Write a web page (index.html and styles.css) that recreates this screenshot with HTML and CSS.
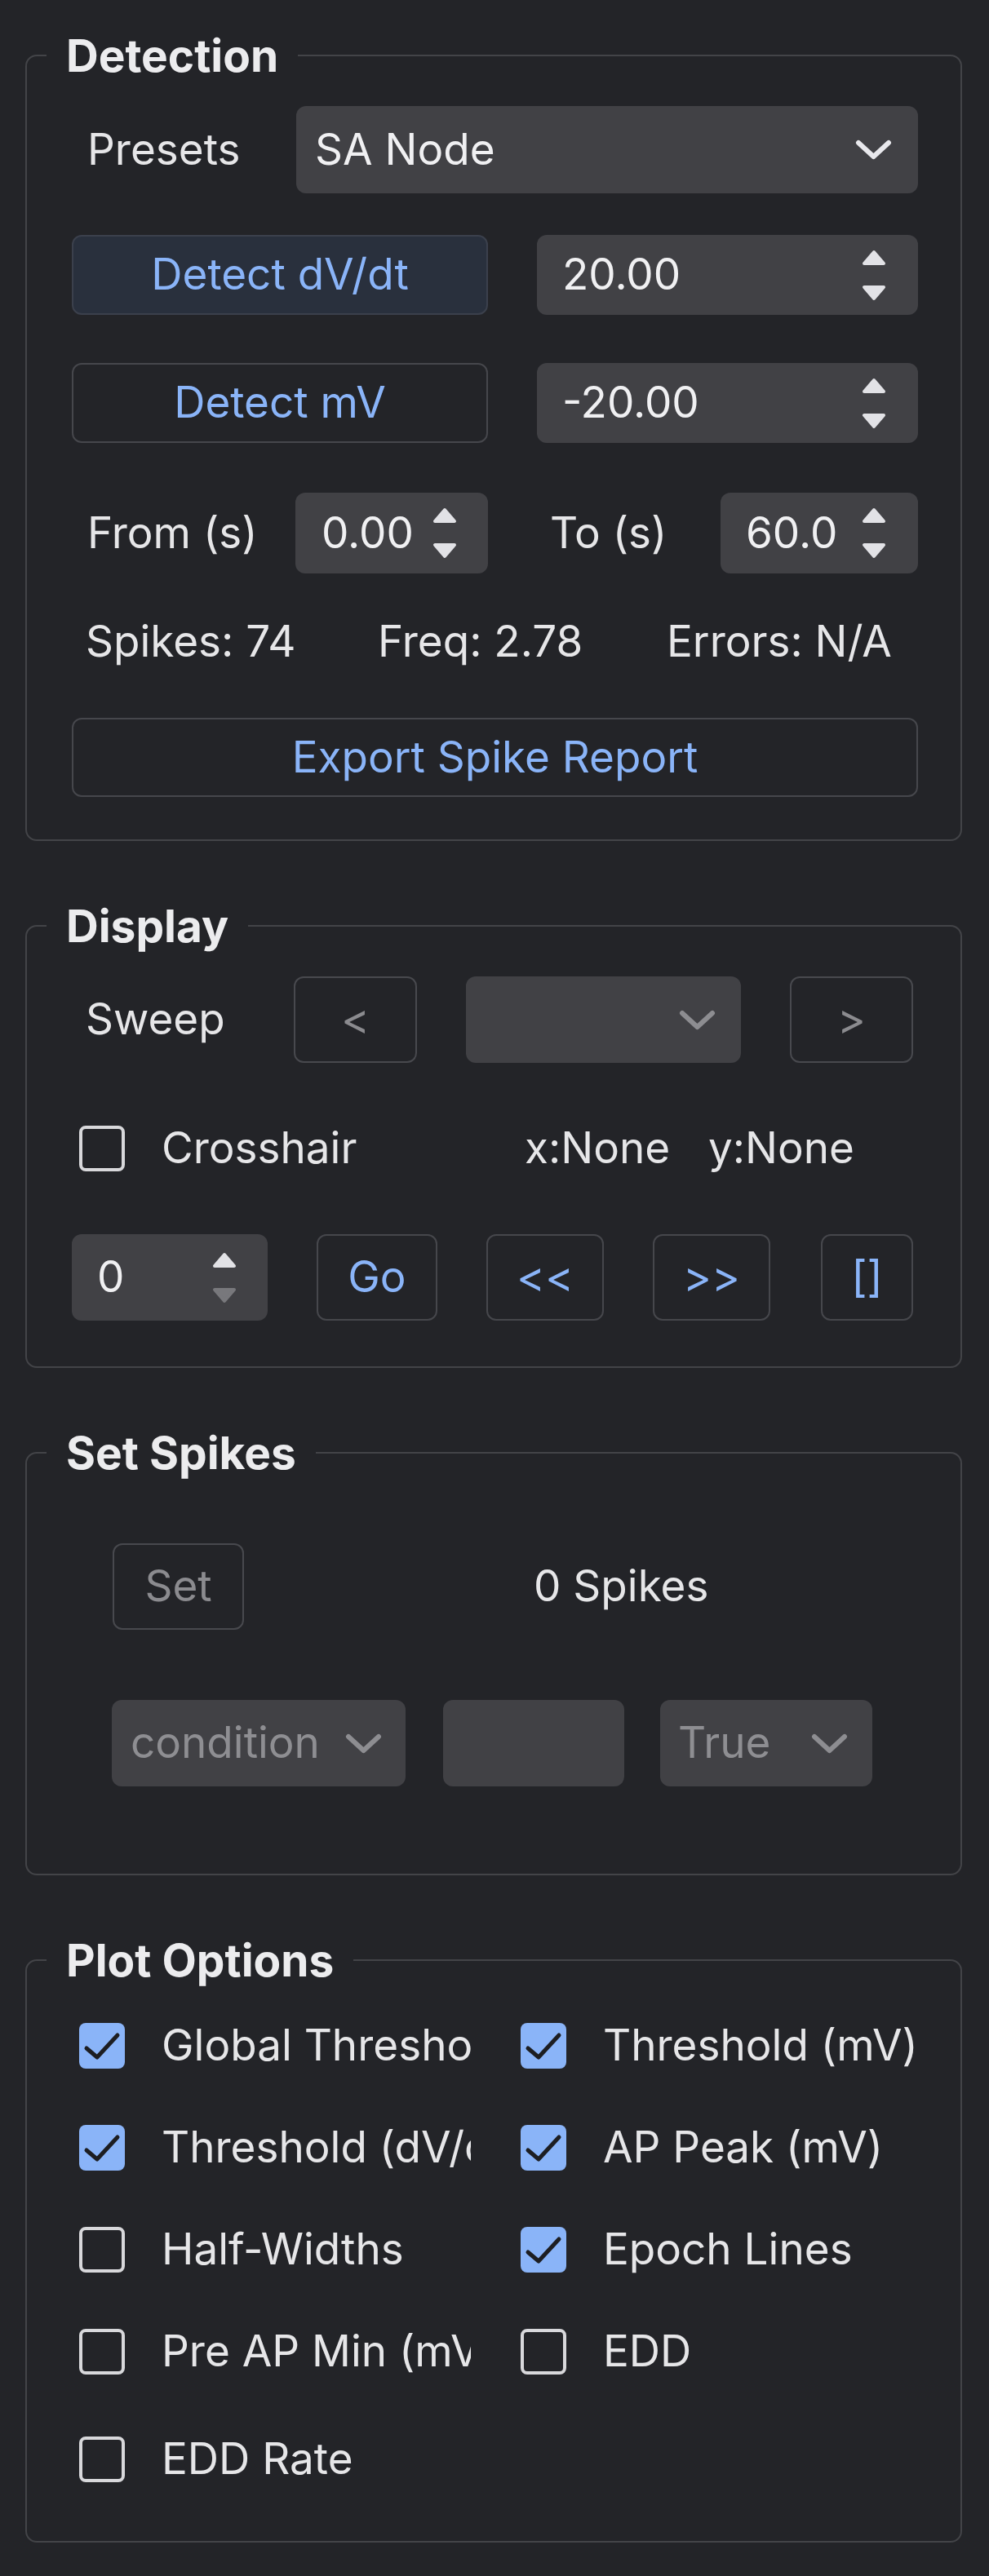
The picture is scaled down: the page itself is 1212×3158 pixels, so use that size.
FILE: index.html
```html
<!DOCTYPE html>
<html>
<head>
<meta charset="utf-8">
<title>Spike Detection Panel</title>
<link rel="stylesheet" href="styles.css">
</head>
<body>
<main class="panel">

  <fieldset class="group g-detection">
    <legend>Detection</legend>
    <div class="row r-presets">
      <span class="lbl lbl-presets">Presets</span>
      <div class="combo combo-presets">
        <span>SA Node</span>
        <svg class="chev" width="45" height="25" viewBox="0 0 45 25"><polyline points="4,4 22.5,21 41,4"/></svg>
      </div>
    </div>
    <div class="row r-dvdt">
      <button class="btn btn-detect primary">Detect dV/dt</button>
      <div class="spin spin-wide">
        <span>20.00</span>
        <svg class="arrows" width="30" height="63" viewBox="0 0 30 63"><path d="M15 3 L27 17 L3 17 Z"/><path d="M3 46 L27 46 L15 60 Z"/></svg>
      </div>
    </div>
    <div class="row r-mv">
      <button class="btn btn-detect">Detect mV</button>
      <div class="spin spin-wide">
        <span>-20.00</span>
        <svg class="arrows" width="30" height="63" viewBox="0 0 30 63"><path d="M15 3 L27 17 L3 17 Z"/><path d="M3 46 L27 46 L15 60 Z"/></svg>
      </div>
    </div>
    <div class="row r-range">
      <span class="lbl lbl-from">From (s)</span>
      <div class="spin spin-from">
        <span>0.00</span>
        <svg class="arrows" width="30" height="63" viewBox="0 0 30 63"><path d="M15 3 L27 17 L3 17 Z"/><path d="M3 46 L27 46 L15 60 Z"/></svg>
      </div>
      <span class="lbl lbl-to">To (s)</span>
      <div class="spin spin-to">
        <span>60.0</span>
        <svg class="arrows" width="30" height="63" viewBox="0 0 30 63"><path d="M15 3 L27 17 L3 17 Z"/><path d="M3 46 L27 46 L15 60 Z"/></svg>
      </div>
    </div>
    <div class="row r-stats">
      <span class="stat">Spikes: 74</span>
      <span class="stat">Freq: 2.78</span>
      <span class="stat">Errors: N/A</span>
    </div>
    <div class="row r-export">
      <button class="btn btn-export">Export Spike Report</button>
    </div>
  </fieldset>

  <fieldset class="group g-display">
    <legend>Display</legend>
    <div class="row r-sweep">
      <span class="lbl lbl-sweep">Sweep</span>
      <button class="btn btn-nav disabled">&lt;</button>
      <div class="combo combo-sweep">
        <span></span>
        <svg class="chev dim" width="45" height="25" viewBox="0 0 45 25"><polyline points="4,4 22.5,21 41,4"/></svg>
      </div>
      <button class="btn btn-nav disabled">&gt;</button>
    </div>
    <div class="row r-cross">
      <span class="check"></span>
      <span class="cross-lbl">Crosshair</span>
      <span class="coord coord-x">x:None</span>
      <span class="coord">y:None</span>
    </div>
    <div class="row r-nav">
      <div class="spin spin-sweep">
        <span>0</span>
        <svg class="arrows half" width="30" height="63" viewBox="0 0 30 63"><path d="M15 3 L27 17 L3 17 Z"/><path class="off" d="M3 46 L27 46 L15 60 Z"/></svg>
      </div>
      <button class="btn btn-go">Go</button>
      <button class="btn btn-jump">&lt;&lt;</button>
      <button class="btn btn-jump">&gt;&gt;</button>
      <button class="btn btn-bracket">[]</button>
    </div>
  </fieldset>

  <fieldset class="group g-spikes">
    <legend>Set Spikes</legend>
    <div class="row r-set">
      <button class="btn btn-set disabled">Set</button>
      <span class="spike-count">0 Spikes</span>
    </div>
    <div class="row r-cond">
      <div class="combo combo-cond disabled">
        <span>condition</span>
        <svg class="chev dim" width="45" height="25" viewBox="0 0 45 25"><polyline points="4,4 22.5,21 41,4"/></svg>
      </div>
      <div class="field field-empty"></div>
      <div class="combo combo-true disabled">
        <span>True</span>
        <svg class="chev dim" width="45" height="25" viewBox="0 0 45 25"><polyline points="4,4 22.5,21 41,4"/></svg>
      </div>
    </div>
  </fieldset>

  <fieldset class="group g-plot">
    <legend>Plot Options</legend>
    <div class="opts">
      <label class="opt"><span class="check on"><svg width="56" height="56" viewBox="0 0 56 56"><polyline points="9,31 22,42 47,15"/></svg></span><span class="opt-lbl">Global Threshold</span></label>
      <label class="opt"><span class="check on"><svg width="56" height="56" viewBox="0 0 56 56"><polyline points="9,31 22,42 47,15"/></svg></span><span class="opt-lbl">Threshold (mV)</span></label>
      <label class="opt"><span class="check on"><svg width="56" height="56" viewBox="0 0 56 56"><polyline points="9,31 22,42 47,15"/></svg></span><span class="opt-lbl">Threshold (dV/dt)</span></label>
      <label class="opt"><span class="check on"><svg width="56" height="56" viewBox="0 0 56 56"><polyline points="9,31 22,42 47,15"/></svg></span><span class="opt-lbl">AP Peak (mV)</span></label>
      <label class="opt"><span class="check"></span><span class="opt-lbl">Half-Widths</span></label>
      <label class="opt"><span class="check on"><svg width="56" height="56" viewBox="0 0 56 56"><polyline points="9,31 22,42 47,15"/></svg></span><span class="opt-lbl">Epoch Lines</span></label>
      <label class="opt"><span class="check"></span><span class="opt-lbl">Pre AP Min (mV)</span></label>
      <label class="opt"><span class="check"></span><span class="opt-lbl">EDD</span></label>
      <label class="opt opt-last"><span class="check"></span><span class="opt-lbl">EDD Rate</span></label>
    </div>
  </fieldset>

</main>
</body>
</html>
```

FILE: styles.css
```css
* { box-sizing: border-box; }

html, body {
  margin: 0;
  padding: 0;
  background: #232428;
}

body {
  font-family: Inter, "Noto Sans", "DejaVu Sans", sans-serif;
  font-size: 53px;
  line-height: 1.2;
  color: #e6e6e8;
}

.panel {
  width: 1212px;
  padding: 38px 33px 40px 31px;
}

/* ---------- group boxes ---------- */
.group {
  margin: 0 0 74px;
  padding: 32px 52px 52px 55px;
  border: 2px solid #434448;
  border-radius: 14px;
  min-width: 0;
}

.group legend {
  margin-left: -31px;
  padding: 0 24px;
  height: 60px;
  line-height: 60px;
  font-size: 55px;
  font-weight: 700;
  color: #ececee;
}

.row {
  display: flex;
  align-items: center;
}

/* ---------- generic widgets ---------- */
.btn {
  font: inherit;
  color: #8ab4f8;
  background: transparent;
  border: 2px solid #46474c;
  border-radius: 12px;
  padding: 0;
  height: 100%;
  display: flex;
  align-items: center;
  justify-content: center;
}

.btn.primary {
  background: #29303d;
  border-color: #3b404c;
}

.btn.disabled {
  color: #8b8b8f;
  border-color: #48494e;
}

.combo,
.spin,
.field {
  height: 100%;
  background: #414145;
  border-radius: 12px;
  display: flex;
  align-items: center;
  justify-content: space-between;
  color: #f0f0f2;
}

.combo.disabled { color: #8e8e92; }

.chev polyline {
  fill: none;
  stroke: #e8e8ec;
  stroke-width: 6;
  stroke-linecap: round;
  stroke-linejoin: round;
}

.chev.dim polyline { stroke: #8d8d91; }

.arrows path {
  fill: #e2e2e6;
  stroke: #e2e2e6;
  stroke-width: 4;
  stroke-linejoin: round;
}

.arrows .off {
  fill: #78787c;
  stroke: #78787c;
}

.check {
  flex: 0 0 56px;
  width: 56px;
  height: 56px;
  border: 4px solid #d8d8db;
  border-radius: 8px;
  display: block;
}

.check.on {
  border: none;
  background: #8ab4f8;
}

.check svg { display: block; }

.check polyline {
  fill: none;
  stroke: #1d1e22;
  stroke-width: 5;
  stroke-linecap: round;
  stroke-linejoin: round;
}

/* ---------- Detection ---------- */
.r-presets { height: 107px; }

.lbl-presets {
  flex: 0 0 275px;
  padding-left: 19px;
}

.combo-presets {
  flex: 1;
  padding: 0 32px 0 23px;
}

.r-dvdt { height: 98px; margin-top: 51px; }
.r-mv { height: 98px; margin-top: 59px; }

.btn-detect { flex: 0 0 510px; }

.spin-wide {
  margin-left: 60px;
  flex: 1;
  padding: 0 39px 0 31px;
}

.r-range { height: 99px; margin-top: 61px; }

.lbl-from {
  flex: 0 0 274px;
  padding-left: 19px;
}

.spin-from {
  flex: 0 0 236px;
  padding: 0 38px 0 32px;
}

.lbl-to {
  flex: 0 0 285px;
  padding-left: 76px;
}

.spin-to {
  flex: 1;
  padding: 0 39px 0 31px;
}

.r-stats {
  height: 56px;
  margin-top: 52px;
  display: grid;
  grid-template-columns: 358px 354px auto;
  padding-left: 17px;
  align-items: center;
}

.r-export { height: 97px; margin-top: 69px; }
.btn-export { flex: 1; }

/* ---------- Display ---------- */
.g-display { padding-bottom: 56px; }

.r-sweep { height: 106px; }

.lbl-sweep {
  flex: 0 0 272px;
  padding-left: 17px;
}

.btn-nav { flex: 0 0 151px; }

.combo-sweep {
  flex: 0 0 337px;
  margin: 0 60px;
  padding: 0 31px 0 23px;
}

.r-cross { height: 56px; margin-top: 77px; padding-left: 9px; }

.cross-lbl {
  flex: 0 0 490px;
  padding-left: 45px;
}

.coord-x { flex: 0 0 225px; }

.r-nav { height: 106px; margin-top: 77px; }

.spin-sweep {
  flex: 0 0 240px;
  padding: 0 38px 0 31px;
}

.btn-go { flex: 0 0 148px; margin-left: 60px; }
.btn-jump { flex: 0 0 144px; margin-left: 60px; }
.btn-bracket { flex: 0 0 113px; margin-left: 62px; }

/* ---------- Set Spikes ---------- */
.g-spikes { padding-bottom: 107px; }

.r-set { height: 106px; margin-top: 49px; }

.btn-set {
  flex: 0 0 161px;
  margin-left: 50px;
}

.spike-count { margin-left: 355px; }

.r-cond { height: 106px; margin-top: 86px; }

.combo-cond {
  flex: 0 0 360px;
  margin-left: 49px;
  padding: 0 29px 0 23px;
}

.field-empty {
  flex: 0 0 222px;
  margin-left: 46px;
}

.combo-true {
  flex: 0 0 260px;
  margin-left: 44px;
  padding: 0 30px 0 22px;
}

/* ---------- Plot Options ---------- */
.g-plot {
  padding-top: 47px;
  padding-bottom: 72px;
}

.opts {
  display: grid;
  grid-template-columns: 480px 1fr;
  column-gap: 61px;
  row-gap: 69px;
  padding-left: 9px;
}

.opt {
  display: flex;
  align-items: center;
  height: 56px;
  min-width: 0;
}

.opt-last { margin-top: 7px; }

.opt-lbl {
  margin-left: 45px;
  white-space: nowrap;
  overflow: hidden;
  min-width: 0;
}

.opt:nth-child(even) .opt-lbl { overflow: visible; }
```
